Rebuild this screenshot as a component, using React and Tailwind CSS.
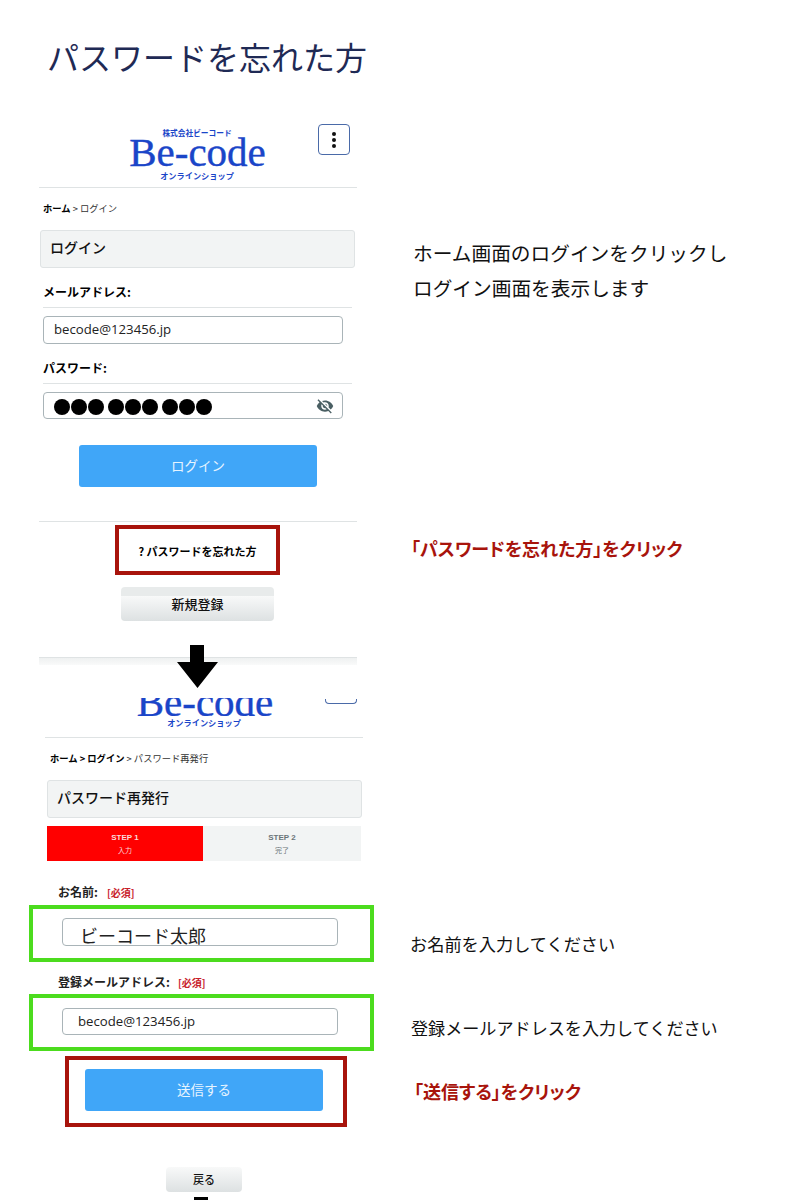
import React from 'react';

const jp = 'font-["Noto_Sans_CJK_JP",sans-serif]';

const TitleBox = ({ children, className }) => (
  <div className={`w-[315px] h-[38px] flex items-center pl-[9px] pb-[3px] bg-[#f2f4f4] border border-[#dfe3e4] rounded-[3px] text-[14px] font-medium text-[#111] ${className}`}>
    {children}
  </div>
);

const Input = ({ className, children }) => (
  <div className={`flex items-center border border-[#a9b4b8] rounded-[4px] bg-white ${className}`}>
    {children}
  </div>
);

const BlueButton = ({ children, className }) => (
  <div className={`w-[238px] h-[42px] shrink-0 flex items-center justify-center pb-[2px] bg-[#40a6f8] rounded-[3px] text-[13.5px] text-[#e6f4ff] ${className}`}>
    {children}
  </div>
);

const Required = ({ className }) => (
  <span className={`text-[10px] font-bold text-[#c8202a] ${className}`}>[必須]</span>
);

const EyeOff = () => (
  <svg viewBox="0 0 24 24" className="w-[18px] h-[18px] fill-[#4a5f63]">
    <path d="M12 7c2.76 0 5 2.24 5 5 0 .65-.13 1.26-.36 1.83l2.92 2.92c1.51-1.26 2.7-2.89 3.43-4.75-1.73-4.39-6-7.5-11-7.5-1.4 0-2.74.25-3.98.7l2.16 2.16C10.74 7.13 11.35 7 12 7zM2 4.27l2.28 2.28.46.46C3.08 8.3 1.78 10.02 1 12c1.73 4.39 6 7.5 11 7.5 1.55 0 3.03-.3 4.38-.84l.42.42L19.73 22 21 20.73 3.27 3 2 4.27zM7.53 9.8l1.55 1.55c-.05.21-.08.43-.08.65 0 1.66 1.34 3 3 3 .22 0 .44-.03.65-.08l1.55 1.55c-.67.33-1.41.53-2.2.53-2.76 0-5-2.24-5-5 0-.79.2-1.53.53-2.2zm4.31-.78l3.15 3.15.02-.16c0-1.66-1.34-3-3-3l-.17.01z" />
  </svg>
);

const Dots = () => (
  <div className="flex gap-px">
    <div className="w-4 h-4 rounded-full bg-black" />
    <div className="w-4 h-4 rounded-full bg-black" />
    <div className="w-4 h-4 rounded-full bg-black" />
  </div>
);

const App = () => {
  return (
    <div className={`relative w-[800px] h-[1200px] overflow-hidden bg-white text-black ${jp}`}>
      <h1 className="h-[116px] flex items-center pl-[47px] pb-[4px] text-[32px] font-normal text-[#1f2a55]">パスワードを忘れた方</h1>

      <div className="flex">
        <div className="w-[400px] shrink-0 flex flex-col">
          {/* login screen */}
          <div className="ml-[39px] w-[318px] h-[72px] flex items-start pl-[88px] border-b border-[#dfe3e4]">
            <div className="w-[140px] flex flex-col items-center text-[#1a45c8]">
              <span className="mt-[12px] h-[10px] leading-[10px] text-[7.7px] font-bold">株式会社ビーコード</span>
              <span className="ml-[1px] h-[29px] leading-[29px] text-[41px] font-['Liberation_Serif',serif] [-webkit-text-stroke:0.4px_#1a45c8]">Be-code</span>
              <span className="mt-[3px] h-[10px] leading-[10px] text-[8.2px] font-bold">オンラインショップ</span>
            </div>
            <div className="ml-[51px] mt-[8px] w-[32px] h-[31px] flex flex-col items-center justify-center gap-[2px] border border-[#4a6aa8] rounded-[4px]">
              <div className="w-1 h-1 rounded-full bg-[#111]" />
              <div className="w-1 h-1 rounded-full bg-[#111]" />
              <div className="w-1 h-1 rounded-full bg-[#111]" />
            </div>
          </div>
          <div className="ml-[43px] mt-[15px] h-[11px] leading-[11px] text-[9.3px] text-[#333]">
            <span className="font-bold text-black">ホーム</span> &gt; ログイン
          </div>
          <TitleBox className="ml-[40px] mt-[16px]">ログイン</TitleBox>
          <div className="ml-[43px] mt-[16px] h-[16px] leading-[16px] text-[12px] font-bold">メールアドレス:</div>
          <div className="ml-[43px] mt-[7px] w-[309px] h-px bg-[#dfe3e4]" />
          <Input className="ml-[43px] mt-[8px] w-[300px] h-[28px] pl-[10px] text-[13.2px] text-[#222] font-['Open_Sans',sans-serif]">becode@123456.jp</Input>
          <div className="ml-[43px] mt-[16px] h-[16px] leading-[16px] text-[12px] font-bold">パスワード:</div>
          <div className="ml-[43px] mt-[7px] w-[309px] h-px bg-[#dfe3e4]" />
          <Input className="ml-[43px] mt-[8px] w-[300px] h-[27px] pl-[10px] pr-[8px] justify-between">
            <div className="flex gap-[4px] mt-[3px]">
              <Dots />
              <Dots />
              <Dots />
            </div>
            <EyeOff />
          </Input>
          <BlueButton className="ml-[79px] mt-[26px]">ログイン</BlueButton>
          <div className="ml-[39px] mt-[34px] w-[318px] h-px bg-[#dfe3e4]" />
          <div className="ml-[115px] mt-[3px] w-[165px] h-[50px] flex items-center justify-center pt-[3px] border-4 border-[#a8140c] text-[11px] font-bold">
            ? パスワードを忘れた方
          </div>
          <div className="ml-[121px] mt-[12px] w-[153px] h-[34px] flex items-center justify-center rounded-[4px] bg-[linear-gradient(to_bottom,#e8ebeb_0%,#e8ebeb_25%,#f8f9f9_26%,#dde1e2_100%)] text-[13px] font-medium text-[#111]">新規登録</div>
          <div className="ml-[39px] mt-[36px] w-[318px] h-[8px] border-t border-[#dfe3e4] bg-gradient-to-b from-[#eff1f1] to-[#f9fafa]" />

          {/* reissue screen */}
          <div className="ml-[45px] mt-[33px] w-[318px] h-[18px] flex pl-[90px]">
            <div className="w-[140px] h-[18px] flex justify-center items-end overflow-hidden text-[#1a45c8]">
              <span className="leading-[28px] text-[41px] font-['Liberation_Serif',serif] [-webkit-text-stroke:0.4px_#1a45c8]">Be-code</span>
            </div>
            <div className="ml-[50px] mt-px w-[32px] h-[5px] border-x border-b border-[#4a6aa8] rounded-b-[4px]" />
          </div>
          <div className="ml-[45px] mt-px w-[318px] h-[10px] leading-[10px] text-center text-[8.2px] font-bold text-[#1a45c8]">オンラインショップ</div>
          <div className="ml-[45px] mt-[10px] w-[318px] h-px bg-[#dfe3e4]" />
          <div className="ml-[50px] mt-[15px] h-[11px] leading-[11px] text-[9.3px] text-[#333]">
            <span className="font-bold text-black">ホーム &gt; ログイン</span> &gt; パスワード再発行
          </div>
          <TitleBox className="ml-[47px] mt-[16px]">パスワード再発行</TitleBox>
          <div className="ml-[47px] mt-[8px] w-[314px] h-[35px] flex">
            <div className="w-[156px] flex flex-col items-center justify-center bg-[#ff0000] text-[#f9dcdc]">
              <span className="leading-[12px] text-[8px] font-bold font-['Liberation_Sans',sans-serif]">STEP 1</span>
              <span className="leading-[12px] text-[7px]">入力</span>
            </div>
            <div className="flex-1 flex flex-col items-center justify-center bg-[#f2f4f4] text-[#6b7478]">
              <span className="leading-[12px] text-[8px] font-bold font-['Liberation_Sans',sans-serif]">STEP 2</span>
              <span className="leading-[12px] text-[7px]">完了</span>
            </div>
          </div>
          <div className="ml-[58px] mt-[23px] h-[16px] flex items-center text-[12px] font-bold text-[#222]">
            お名前:<Required className="ml-[9px]" />
          </div>
          <div className="ml-[29px] mt-[5px] w-[345px] h-[57px] pl-[29px] pt-[9px] border-4 border-[#4cdc1e]">
            <Input className="w-[276px] h-[28px] pl-[17px] pt-[5px] text-[18px] leading-[24px] text-[#222]">ビーコード太郎</Input>
          </div>
          <div className="ml-[58px] mt-[12px] h-[16px] flex items-center text-[12px] font-bold text-[#222]">
            登録メールアドレス:<Required className="ml-[8px]" />
          </div>
          <div className="ml-[29px] mt-[4px] w-[345px] h-[57px] pl-[29px] pt-[10px] border-4 border-[#4cdc1e]">
            <Input className="w-[276px] h-[27px] pl-[15px] text-[13.2px] text-[#222] font-['Open_Sans',sans-serif]">becode@123456.jp</Input>
          </div>
          <div className="ml-[65px] mt-[5px] w-[282px] h-[71px] pl-[16px] pt-[9px] border-4 border-[#a8140c]">
            <BlueButton>送信する</BlueButton>
          </div>
          <div className="ml-[166px] mt-[40px] w-[76px] h-[25px] flex items-center justify-center rounded-[4px] bg-gradient-to-b from-[#f8f9f9] to-[#dde1e2] text-[11px] font-medium text-[#111]">戻る</div>
          <div className="ml-[194px] mt-[5px] w-[14px] h-[20px] bg-black" />
        </div>

        {/* notes */}
        <div className="flex-1 flex flex-col">
          <p className="mt-[119px] ml-[13px] text-[19.7px] leading-[35px] text-[#111]">
            ホーム画面のログインをクリックし<br />ログイン画面を表示します
          </p>
          <p className="mt-[231px] ml-[11px] h-[24px] leading-[24px] text-[18px] font-bold [font-feature-settings:'palt'] text-[#a8140c]">「パスワードを忘れた方」をクリック</p>
          <p className="mt-[372px] ml-[10px] h-[24px] leading-[24px] text-[17.2px] text-[#111]">お名前を入力してください</p>
          <p className="mt-[60px] ml-[11px] h-[24px] leading-[24px] text-[17.1px] text-[#111]">登録メールアドレスを入力してください</p>
          <p className="mt-[39px] ml-[14px] h-[24px] leading-[24px] text-[18px] font-bold [font-feature-settings:'palt'] text-[#a8140c]">「送信する」をクリック</p>
        </div>
      </div>

      {/* arrow between the two screens */}
      <svg viewBox="0 0 41 43" className="absolute left-[177px] top-[645px] w-[41px] h-[43px] fill-black">
        <path d="M13 0h14v17h14L20.5 43 0 17h13z" />
      </svg>
    </div>
  );
};

export default App;
